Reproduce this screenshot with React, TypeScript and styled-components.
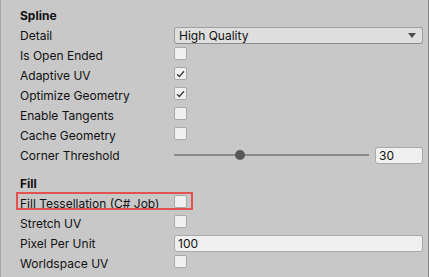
import styled, { createGlobalStyle } from "styled-components";

const GlobalStyle = createGlobalStyle`
  html, body {
    margin: 0;
    padding: 0;
    background: #c8c8c8;
  }
  body {
    font-family: Inter, "Liberation Sans", sans-serif;
    font-size: 12px;
    color: #111;
  }
`;

const Panel = styled.div`
  width: 429px;
  height: 277px;
  box-sizing: border-box;
  background: #c8c8c8;
  border-left: 1px solid #a6a6a6;
  border-right: 1px solid #858585;
  padding: 6px 5px 0 0;
  overflow: hidden;
`;

const Section = styled.div`
  display: flex;
  flex-direction: column;
  gap: 2px;
  & + & {
    margin-top: 10px;
  }
`;

const Row = styled.div<{ $highlight?: boolean }>`
  position: relative;
  display: flex;
  align-items: flex-start;
  height: 18px;
  padding-left: 19px;

  ${(p) =>
    p.$highlight &&
    `
    &::after {
      content: "";
      position: absolute;
      left: 15px;
      top: -2px;
      width: 173px;
      height: 14px;
      border: 2px solid #e4524f;
      pointer-events: none;
    }
  `}
`;

const Header = styled.div`
  height: 18px;
  line-height: 18px;
  padding-left: 19px;
  padding-top: 1px;
  box-sizing: border-box;
  font-weight: 700;
`;

const Label = styled.div`
  width: 154px;
  flex: none;
  line-height: 18px;
  padding-top: 1px;
  white-space: nowrap;
`;

const Field = styled.div`
  flex: 1;
  display: flex;
  align-items: center;
  min-width: 0;
`;

const Dropdown = styled.div`
  flex: 1;
  height: 17px;
  margin-top: 1px;
  box-sizing: border-box;
  display: flex;
  align-items: center;
  justify-content: space-between;
  padding: 0 6px 0 4px;
  background: #dfdfdf;
  border: 1px solid #9f9f9f;
  border-bottom-color: #8c8c8c;
  border-radius: 3px;
`;

const Arrow = styled.span`
  width: 0;
  height: 0;
  border-left: 4px solid transparent;
  border-right: 4px solid transparent;
  border-top: 5px solid #4b4b4b;
`;

const Checkbox = styled.div`
  width: 13px;
  height: 13px;
  margin-top: 1px;
  box-sizing: border-box;
  background: #f0f0f0;
  border: 1px solid #a9a9a9;
  border-radius: 2px;
  display: flex;
  align-items: center;
  justify-content: center;
`;

const TextField = styled.div<{ $width?: number }>`
  ${(p) => (p.$width ? `width: ${p.$width}px; flex: none;` : "flex: 1;")}
  height: 17px;
  margin-top: 1px;
  box-sizing: border-box;
  padding: 0 3px;
  line-height: 15px;
  background: #f0f0f0;
  border: 1px solid #a9a9a9;
  border-radius: 3px;
`;

const Slider = styled.div`
  flex: 1;
  height: 18px;
  position: relative;
  margin-right: 6px;
`;

const Track = styled.div`
  position: absolute;
  left: 0;
  right: 0;
  top: 8px;
  height: 2px;
  background: #8a8a8a;
`;

const Thumb = styled.div`
  position: absolute;
  top: 4px;
  width: 10px;
  height: 10px;
  border-radius: 50%;
  background: #585858;
`;

const Check = () => (
  <svg width="9" height="8" viewBox="0 0 9 8">
    <polyline
      points="1,4.2 3.4,6.5 8,1.2"
      fill="none"
      stroke="#3c3c3c"
      strokeWidth="1.3"
    />
  </svg>
);

const BoolRow = ({
  label,
  checked,
  highlight,
}: {
  label: string;
  checked?: boolean;
  highlight?: boolean;
}) => (
  <Row $highlight={highlight}>
    <Label>{label}</Label>
    <Field>
      <Checkbox>{checked && <Check />}</Checkbox>
    </Field>
  </Row>
);

const App = () => {
  const sliderPos = 0.34;
  return (
    <>
      <GlobalStyle />
      <Panel>
        <Section>
          <Header>Spline</Header>
          <Row>
            <Label>Detail</Label>
            <Dropdown>
              <span>High Quality</span>
              <Arrow />
            </Dropdown>
          </Row>
          <BoolRow label="Is Open Ended" />
          <BoolRow label="Adaptive UV" checked />
          <BoolRow label="Optimize Geometry" checked />
          <BoolRow label="Enable Tangents" />
          <BoolRow label="Cache Geometry" />
          <Row>
            <Label>Corner Threshold</Label>
            <Field>
              <Slider>
                <Track />
                <Thumb style={{ left: `calc(${sliderPos * 100}% - 5px)` }} />
              </Slider>
              <TextField $width={48}>30</TextField>
            </Field>
          </Row>
        </Section>
        <Section>
          <Header>Fill</Header>
          <BoolRow label="Fill Tessellation (C# Job)" highlight />
          <BoolRow label="Stretch UV" />
          <Row>
            <Label>Pixel Per Unit</Label>
            <TextField>100</TextField>
          </Row>
          <BoolRow label="Worldspace UV" />
        </Section>
      </Panel>
    </>
  );
};

export default App;
